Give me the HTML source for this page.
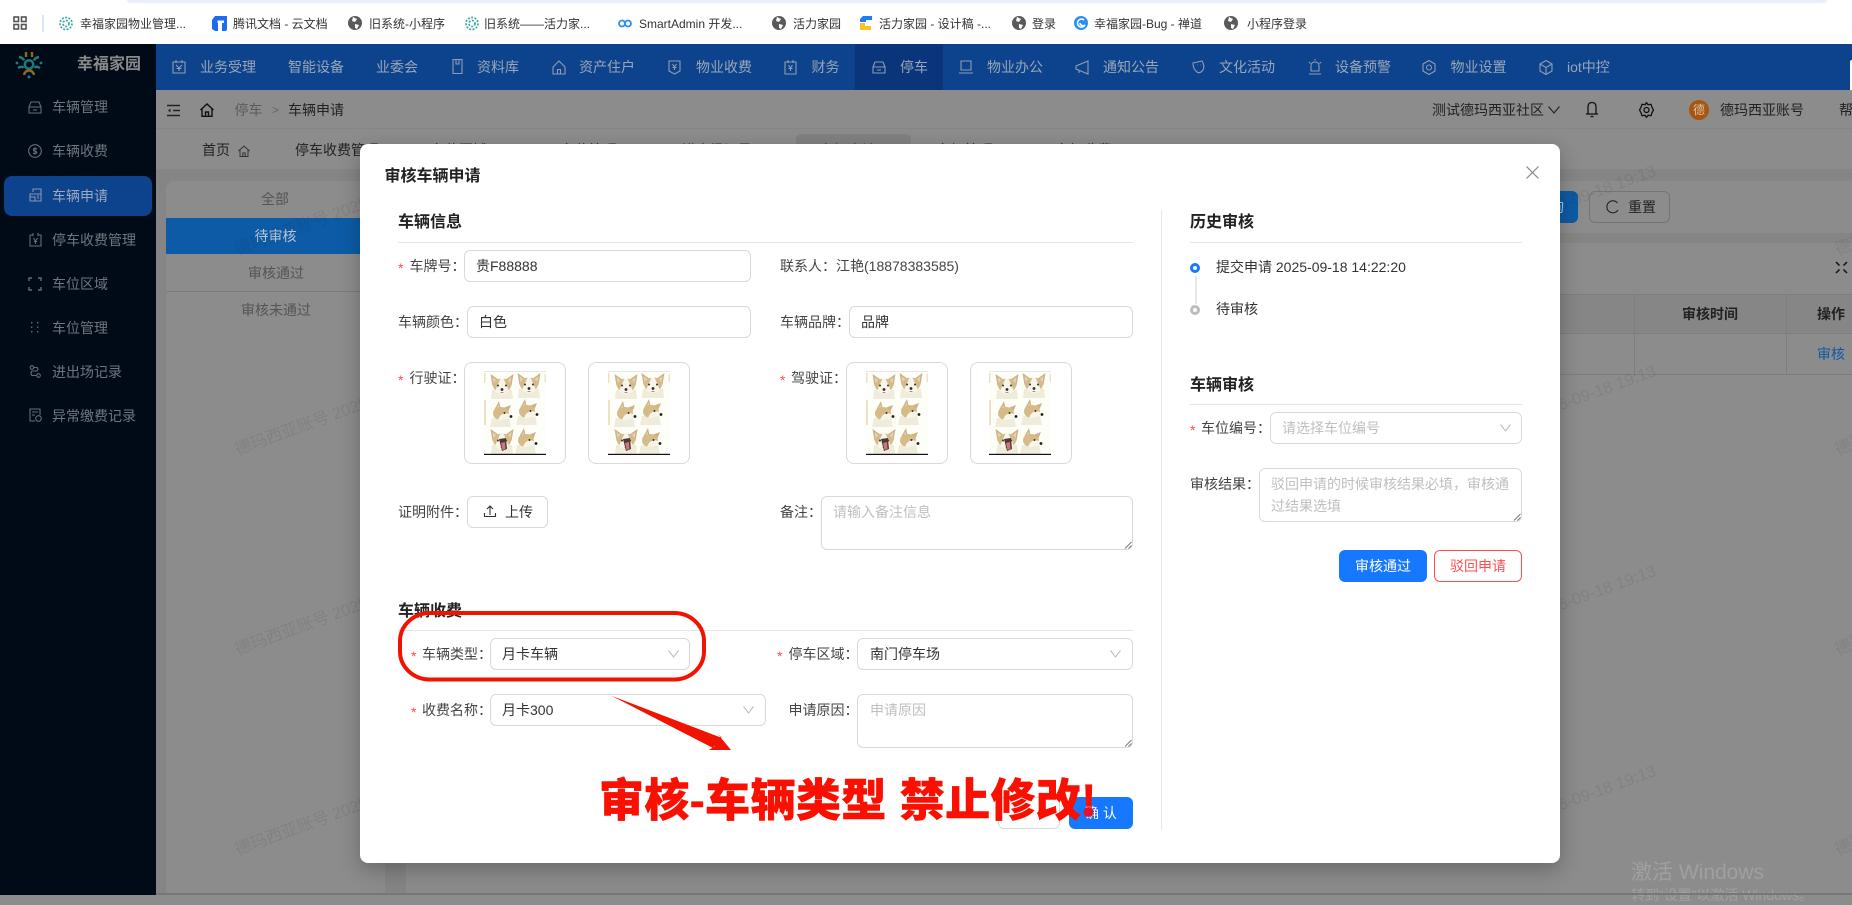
<!DOCTYPE html>
<html lang="zh-CN">
<head>
<meta charset="utf-8">
<title>审核车辆申请</title>
<style>
*{box-sizing:border-box}
html,body{margin:0;padding:0;width:1852px;height:895px;overflow:hidden;background:#8c8c8c;font-family:"Liberation Sans","Noto Sans CJK SC",sans-serif;font-size:14px;color:#333}
.a{position:absolute}
.t{position:absolute;white-space:nowrap;line-height:20px;height:20px}
.bm{font-size:12px;color:#333;top:13.5px}
.nav{color:#9aa6b9;top:57px}
.side{color:#6f757d;left:52px}
svg{position:absolute;overflow:visible}
.ic{fill:none;stroke:#8f9cb2;stroke-width:1.1}
.sic{fill:none;stroke:#666c74;stroke-width:1.1}
.wm{position:absolute;white-space:nowrap;font-size:16.5px;line-height:20px;color:rgba(0,0,0,.075);transform-origin:0 100%;transform:rotate(-20deg)}
.box{position:absolute;background:#fff;border:1px solid #d9d9d9;border-radius:6px}
.star{color:#ff4d4f;font-size:14px;line-height:20px}
.dark{color:#444}
.val{color:#333}
.ph{color:#bfbfbf}
.h{font-weight:700;font-size:16px;color:#222}
.hr{position:absolute;height:1px;background:#e6e6e6}
.img{position:absolute;width:102px;height:102px;background:#fff;border:1px solid #d9d9d9;border-radius:8px}
.chev{fill:none;stroke:#bfbfbf;stroke-width:1.1}
.grip{fill:none;stroke:#777;stroke-width:.9}
</style>
</head>
<body>

<!-- browser bookmark bar -->
<div class="a" style="left:0;top:0;width:1852px;height:44px;background:#fff"></div>
<div class="a" style="left:127px;top:0;width:1700px;height:3px;background:#e9eefa;border-radius:0 0 8px 8px"></div>
<svg style="left:13px;top:16px" width="14" height="14"><g fill="none" stroke="#555" stroke-width="1.6"><rect x="1" y="1" width="4.5" height="4.5"/><rect x="8.5" y="1" width="4.5" height="4.5"/><rect x="1" y="8.5" width="4.5" height="4.5"/><rect x="8.5" y="8.5" width="4.5" height="4.5"/></g></svg>
<div class="a" style="left:42px;top:15px;width:2px;height:17px;background:#dbe6f6"></div>

<svg style="left:59px;top:16px" width="14" height="15"><g fill="none" stroke="#3fa9a5" stroke-width="1.7" stroke-dasharray="2 1.4"><circle cx="7" cy="7.5" r="3"/><circle cx="7" cy="7.5" r="6"/></g></svg>
<div class="t bm" style="left:80px">幸福家园物业管理...</div>
<svg style="left:212px;top:16px" width="15" height="15"><path d="M3 0H15V13Q15 15 13 15H10V6H6V15H3L0 13V4Z" fill="#1c6cf0"/><path d="M5.5 4.5H12V7H10V12H8V7H5.5Z" fill="#fff"/></svg>
<div class="t bm" style="left:233px">腾讯文档 - 云文档</div>
<svg style="left:348px;top:16px" width="14" height="14"><circle cx="7" cy="7" r="7" fill="#5a5a5a"/><path d="M5 1L9 3 7 6 4 5ZM7 8L11 9 9 13 7 12Z" fill="#fff"/></svg>
<div class="t bm" style="left:369px">旧系统-小程序</div>
<svg style="left:465px;top:16px" width="14" height="15"><g fill="none" stroke="#3fa9a5" stroke-width="1.7" stroke-dasharray="2 1.4"><circle cx="7" cy="7.5" r="3"/><circle cx="7" cy="7.5" r="6"/></g></svg>
<div class="t bm" style="left:484px">旧系统——活力家...</div>
<svg style="left:618px;top:19px" width="14" height="9"><g fill="none" stroke="#2f8ff0" stroke-width="1.8"><circle cx="4" cy="4.5" r="3"/><circle cx="10" cy="4.5" r="3"/></g></svg>
<div class="t bm" style="left:639px">SmartAdmin 开发...</div>
<svg style="left:772px;top:16px" width="14" height="14"><circle cx="7" cy="7" r="7" fill="#5a5a5a"/><path d="M5 1L9 3 7 6 4 5ZM7 8L11 9 9 13 7 12Z" fill="#fff"/></svg>
<div class="t bm" style="left:793px">活力家园</div>
<svg style="left:859px;top:16px" width="14" height="14"><path d="M4 0H13V4H7V6H1V3Z" fill="#1d7ff0"/><path d="M1 7H6V10H12V14H1Z" fill="#f7c325"/></svg>
<div class="t bm" style="left:879px">活力家园 - 设计稿 -...</div>
<svg style="left:1012px;top:16px" width="14" height="14"><circle cx="7" cy="7" r="7" fill="#5a5a5a"/><path d="M5 1L9 3 7 6 4 5ZM7 8L11 9 9 13 7 12Z" fill="#fff"/></svg>
<div class="t bm" style="left:1032px">登录</div>
<svg style="left:1074px;top:16px" width="14" height="14"><circle cx="7" cy="7" r="7" fill="#2a8ff0"/><path d="M10 4A4 4 0 1 0 11 9 3 3 0 0 1 6 7" fill="none" stroke="#fff" stroke-width="1.6"/></svg>
<div class="t bm" style="left:1094px">幸福家园-Bug - 禅道</div>
<svg style="left:1224px;top:16px" width="14" height="14"><circle cx="7" cy="7" r="7" fill="#5a5a5a"/><path d="M5 1L9 3 7 6 4 5ZM7 8L11 9 9 13 7 12Z" fill="#fff"/></svg>
<div class="t bm" style="left:1247px">小程序登录</div>

<!-- sidebar -->
<div class="a" style="left:0;top:44px;width:156px;height:851px;background:#010b18"></div>
<svg style="left:14px;top:50px" width="30" height="29" viewBox="0 0 30 29"><g fill="none" stroke-width="2.4"><circle cx="15" cy="14.5" r="4.2" stroke="#1f7a80"/><path d="M5 7Q9 7.500 10 10.500M25 7Q21 7.500 20 10.500" stroke="#1f7a80"/><path d="M4 18Q8 15.500 9.500 18M26 18Q22 15.500 20.500 18" stroke="#1f7a80"/><path d="M10 25Q11 20.500 15 20.500 19 20.500 20 25" stroke="#8f6a1e"/><path d="M12 2V7M18 2V7" stroke="#8f6a1e"/></g><g fill="#1f7a80"><circle cx="15" cy="27" r="1.500"/><circle cx="3" cy="13" r="1.400"/><circle cx="27" cy="13" r="1.400"/></g></svg>
<div class="t" style="left:77px;top:55px;color:#8a8a8a;font-size:16px;font-weight:700">幸福家园</div>

<div class="a" style="left:4px;top:176px;width:148px;height:40px;border-radius:8px;background:#0c438c"></div>
<svg class="sic" style="left:28px;top:100px" width="14" height="14"><path d="M1 7L3 2H11L13 7V13H1ZM1 7H13M5 10H9"/></svg>
<div class="t side" style="top:97px">车辆管理</div>
<svg class="sic" style="left:28px;top:144px" width="14" height="14"><circle cx="7" cy="7" r="6.3"/><path d="M9 5Q7 3.5 5.5 5 5 7 7 7 9 7.5 8.500 9 7 10.500 5 9M7 3.500V10.500"/></svg>
<div class="t side" style="top:141px">车辆收费</div>
<svg class="ic" style="left:29px;top:188px;stroke:#8596b3" width="13" height="14"><path d="M4 4V1H12V13H1V6H12M8 8H10M8 10H10M1 9H6V13"/></svg>
<div class="t side" style="top:186px;color:#9aa9c0">车辆申请</div>
<svg class="sic" style="left:29px;top:233px" width="13" height="14"><path d="M1 2H4M9 2H12V13H1V2M4 0V3M9 0V3M4.500 5L6.500 8 8.500 5M6.500 8V11M4.800 8.500H8.200"/></svg>
<div class="t side" style="top:230px">停车收费管理</div>
<svg class="sic" style="left:28px;top:277px;stroke-width:1.4" width="14" height="14"><path d="M1 4V1H4M10 1H13V4M13 10V13H10M4 13H1V10"/></svg>
<div class="t side" style="top:274px">车位区域</div>
<svg style="left:31px;top:322px" width="8" height="11" fill="#666c74"><rect x="0" y="0" width="1.400" height="1.400"/><rect x="6" y="0" width="1.400" height="1.400"/><rect x="0" y="4.500" width="1.400" height="1.400"/><rect x="6" y="4.500" width="1.400" height="1.400"/><rect x="0" y="9" width="1.400" height="1.400"/><rect x="6" y="9" width="1.400" height="1.400"/></svg>
<div class="t side" style="top:318px">车位管理</div>
<svg class="sic" style="left:29px;top:365px" width="12" height="13"><circle cx="3" cy="2.500" r="1.800"/><circle cx="9.500" cy="10.500" r="1.800"/><path d="M5 2.500H8Q10 4 8 6H3Q1 8 3 10.500H7.500"/></svg>
<div class="t side" style="top:362px">进出场记录</div>
<svg class="sic" style="left:29px;top:408px" width="13" height="14"><path d="M6 13H1V1H11V7M3 4H9M3 7H6"/><circle cx="9.500" cy="10.500" r="2.800"/></svg>
<div class="t side" style="top:406px">异常缴费记录</div>

<!-- top nav -->
<div class="a" style="left:156px;top:44px;width:1696px;height:46px;background:#0c438c"></div>
<div class="a" style="left:855px;top:44px;width:88px;height:46px;background:#0a357a"></div>
<div class="a" style="left:1850px;top:60px;width:2px;height:37px;background:#fff;border-radius:2px 0 0 2px"></div>

<svg class="ic" style="left:172px;top:60px" width="14" height="14"><path d="M1 2H13V13H1ZM4 0V3M10 0V3M4 5L7 8 10 5M7 8V11M4.500 8.500H9.500"/></svg>
<div class="t nav" style="left:200px">业务受理</div>
<div class="t nav" style="left:288px">智能设备</div>
<div class="t nav" style="left:376px">业委会</div>
<svg class="ic" style="left:452px;top:59px" width="11" height="15"><path d="M1 .5H10V14.500H1ZM4 .5V5H7V.5"/></svg>
<div class="t nav" style="left:477px">资料库</div>
<svg class="ic" style="left:552px;top:60px" width="14" height="15"><path d="M1 7L7 1 13 7V14H1ZM5.500 14V9.500H8.500V14"/></svg>
<div class="t nav" style="left:579px">资产住户</div>
<svg class="ic" style="left:668px;top:60px" width="13" height="15"><path d="M1 1H12V11L6.500 14 1 11ZM4.500 4L6.500 7 8.500 4M6.500 7V10M4.500 7.500H8.500"/></svg>
<div class="t nav" style="left:696px">物业收费</div>
<svg class="ic" style="left:784px;top:60px" width="13" height="15"><path d="M1 2H12V14H1ZM4 0V3M9 0V3M4.500 5L6.500 8 8.500 5M6.500 8V11M4.500 8.500H8.500"/></svg>
<div class="t nav" style="left:811.500px">财务</div>
<svg class="ic" style="left:872px;top:60px" width="14" height="14"><path d="M1 7L3 2H11L13 7V13H1ZM1 7H13M5 10H9"/></svg>
<div class="t nav" style="left:900px">停车</div>
<svg class="ic" style="left:959px;top:60px" width="14" height="14"><path d="M2 1H12V10H2ZM0 13H14"/></svg>
<div class="t nav" style="left:987px">物业办公</div>
<svg class="ic" style="left:1075px;top:60px" width="14" height="15"><path d="M1 6L13 1V14L1 9ZM4 10V13"/></svg>
<div class="t nav" style="left:1103px">通知公告</div>
<svg class="ic" style="left:1192px;top:60px" width="13" height="14"><path d="M1 3L10 1Q13 6 11 10 8 14 5 12 1 9 1 3ZM5 5H5.500M8 5H8.500"/></svg>
<div class="t nav" style="left:1219px">文化活动</div>
<svg class="ic" style="left:1309px;top:59px" width="12" height="16"><path d="M2 12V7Q2 3 6 3 10 3 10 7V12ZM0 15H12M6 0V1.500M0 3L1.500 4.500M12 3L10.500 4.500"/></svg>
<div class="t nav" style="left:1335px">设备预警</div>
<svg class="ic" style="left:1422px;top:60px" width="14" height="15"><path d="M7 .5L13 4V11L7 14.500 1 11V4Z"/><circle cx="7" cy="7.500" r="2.500"/></svg>
<div class="t nav" style="left:1450.500px">物业设置</div>
<svg class="ic" style="left:1539px;top:60px" width="14" height="15"><path d="M7 .5L13 4V11L7 14.500 1 11V4ZM1 4L7 7.500 13 4M7 7.500V14.500"/></svg>
<div class="t nav" style="left:1567px">iot中控</div>

<!-- breadcrumb row -->
<div class="a" style="left:156px;top:90px;width:1696px;height:39px;background:#8c8c8c;border-bottom:1px solid #858585"></div>
<svg style="left:167px;top:104px" width="13" height="13" fill="none" stroke="#222" stroke-width="1.400"><path d="M0 1.500H13M6 6.500H13M0 11.500H13"/><path d="M3.500 4.500L1 6.500 3.500 8.500Z" fill="#222" stroke="none"/></svg>
<svg style="left:200px;top:103px" width="14" height="14" fill="none" stroke="#111" stroke-width="1.400"><path d="M.5 7L7 1 13.500 7M2 6V13.300H12V6M5.500 13V9H8.500V13"/></svg>
<div class="t" style="left:234.500px;top:100px;color:#5c5c5c">停车</div>
<div class="t" style="left:272px;top:100px;color:#666;font-size:12px">&gt;</div>
<div class="t" style="left:288px;top:100px;color:#222">车辆申请</div>
<div class="t" style="left:1432px;top:100px;color:#222">测试德玛西亚社区</div>
<svg style="left:1548px;top:106px" width="12" height="8" fill="none" stroke="#222" stroke-width="1.100"><path d="M.5 .5L6 7 11.500 .5"/></svg>
<svg style="left:1585px;top:101px" width="14" height="17" fill="none" stroke="#111" stroke-width="1.300"><path d="M3 13V6Q3 1.500 7 1.500 11 1.500 11 6V13ZM1 13H13M5.500 15.500H8.500"/></svg>
<svg style="left:1639px;top:102px" width="15" height="16" fill="none" stroke="#111" stroke-width="1.300"><path d="M7.500 .7L9 2.700 12 2.300 13 5.300 14.500 8 13 10.700 12 13.700 9 13.300 7.500 15.300 6 13.300 3 13.700 2 10.700 .5 8 2 5.300 3 2.300 6 2.700Z"/><circle cx="7.500" cy="8" r="2.500"/></svg>
<div class="a" style="left:1689px;top:100px;width:20px;height:20px;border-radius:50%;background:#a85510;color:#d9c2ad;font-size:12px;line-height:20px;text-align:center">德</div>
<div class="t" style="left:1720px;top:100px;color:#222">德玛西亚账号</div>
<div class="t" style="left:1839px;top:100px;color:#222">帮助</div>

<!-- tabs row -->
<div class="a" style="left:156px;top:130px;width:1696px;height:40px;background:#8c8c8c;border-bottom:1px solid #858585"></div>
<div class="a" style="left:796px;top:134px;width:115px;height:36px;background:#808080;border-radius:5px 5px 0 0"></div>
<div class="t" style="left:202px;top:140px;color:#222">首页</div>
<svg style="left:238px;top:145px" width="12" height="12" fill="none" stroke="#333" stroke-width="1"><path d="M.5 6L6 1 11.500 6M2 5V11.500H10V5M4.800 11V8H7.200V11"/></svg>
<div class="t" style="left:295px;top:140px;color:#222">停车收费管理</div>
<div class="t" style="left:431px;top:140px;color:#333">车位区域</div>
<div class="t" style="left:561px;top:140px;color:#333">车位管理</div>
<div class="t" style="left:682px;top:140px;color:#333">进出场记录</div>
<div class="t" style="left:820px;top:140px;color:#0e4f9c">车辆申请</div>
<div class="t" style="left:937px;top:140px;color:#333">车辆管理</div>
<div class="t" style="left:1056px;top:140px;color:#333">车辆收费</div>

<!-- content background -->
<div class="a" style="left:156px;top:170px;width:1696px;height:725px;background:#858585"></div>
<div class="a" style="left:166px;top:181px;width:219px;height:714px;background:#8c8c8c;border-radius:8px 0 0 0"></div>
<div class="a" style="left:406px;top:181px;width:1446px;height:52px;background:#8c8c8c"></div>
<div class="a" style="left:406px;top:243px;width:1446px;height:652px;background:#8c8c8c"></div>

<div class="t" style="left:261px;top:189px;color:#555">全部</div>
<div class="a" style="left:166px;top:218px;width:219px;height:36px;background:#0d5ba6;color:#b9c8da;text-align:center;line-height:36px">待审核</div>
<div class="t" style="left:248px;top:263px;color:#555">审核通过</div>
<div class="a" style="left:166px;top:291px;width:219px;height:1px;background:#7c7c7c"></div>
<div class="t" style="left:241px;top:300px;color:#555">审核未通过</div>

<!-- right side of page -->
<div class="a" style="left:1500px;top:191px;width:78px;height:32px;background:#0d5ba6;border-radius:6px"></div>
<div class="t" style="left:1536px;top:197px;color:#b9c8da">查询</div>
<div class="a" style="left:1589px;top:191px;width:81px;height:32px;border:1px solid #757575;border-radius:6px"></div>
<svg style="left:1606px;top:200px" width="13" height="14" fill="none" stroke="#222" stroke-width="1.100"><path d="M11.500 3A6 6 0 1 0 12 10"/></svg>
<div class="t" style="left:1628px;top:197px;color:#222">重置</div>
<svg style="left:1835px;top:261px" width="13" height="13" fill="none" stroke="#111" stroke-width="1.500"><path d="M1 1L4.500 4.500M12 1L8.500 4.500M1 12L4.500 8.500M12 12L8.500 8.500"/></svg>
<div class="a" style="left:1560px;top:294px;width:292px;height:39px;background:#868686"></div>
<div class="a" style="left:1560px;top:294px;width:292px;height:1px;background:#7e7e7e"></div>
<div class="a" style="left:1560px;top:333px;width:292px;height:1px;background:#7e7e7e"></div>
<div class="a" style="left:1560px;top:374px;width:292px;height:1px;background:#7e7e7e"></div>
<div class="a" style="left:1634px;top:294px;width:1px;height:80px;background:#7e7e7e"></div>
<div class="a" style="left:1786px;top:294px;width:1px;height:80px;background:#7e7e7e"></div>
<div class="t" style="left:1682px;top:304px;color:#222;font-weight:700">审核时间</div>
<div class="t" style="left:1817px;top:304px;color:#222;font-weight:700">操作</div>
<div class="t" style="left:1817px;top:344px;color:#0d5ba6">审核</div>

<!-- watermarks -->
<div class="wm" style="left:239px;top:240px">德玛西亚账号 2025-09-18 19:13</div>
<div class="wm" style="left:239px;top:440px">德玛西亚账号 2025-09-18 19:13</div>
<div class="wm" style="left:239px;top:640px">德玛西亚账号 2025-09-18 19:13</div>
<div class="wm" style="left:239px;top:840px">德玛西亚账号 2025-09-18 19:13</div>
<div class="wm" style="left:1439px;top:240px">德玛西亚账号 2025-09-18 19:13</div>
<div class="wm" style="left:1439px;top:440px">德玛西亚账号 2025-09-18 19:13</div>
<div class="wm" style="left:1439px;top:640px">德玛西亚账号 2025-09-18 19:13</div>
<div class="wm" style="left:1439px;top:840px">德玛西亚账号 2025-09-18 19:13</div>
<div class="wm" style="left:1839px;top:240px">德玛西亚账号 2025-09-18 19:13</div>
<div class="wm" style="left:1839px;top:440px">德玛西亚账号 2025-09-18 19:13</div>
<div class="wm" style="left:1839px;top:640px">德玛西亚账号 2025-09-18 19:13</div>
<div class="wm" style="left:1839px;top:840px">德玛西亚账号 2025-09-18 19:13</div>

<!-- activation notice -->
<div class="t" style="left:1631px;top:861px;color:#a0a0a0;font-size:21px;line-height:24px;height:24px">激活 Windows</div>
<div class="t" style="left:1631px;top:885px;color:#a0a0a0;font-size:14px">转到“设置”以激活 Windows。</div>
<div class="a" style="left:0;top:893px;width:1852px;height:2px;background:#777"></div>
<div class="a" style="left:0;top:893px;width:156px;height:2px;background:#010b18"></div>

<!-- modal -->
<div class="a" style="left:360px;top:144px;width:1200px;height:719px;background:#fff;border-radius:8px;box-shadow:0 6px 16px rgba(0,0,0,.16),0 9px 28px rgba(0,0,0,.1)"></div>
<div class="t" style="left:384.500px;top:167px;font-size:16px;font-weight:700;color:#222">审核车辆申请</div>
<svg style="left:1526px;top:166px" width="13" height="13" fill="none" stroke="#888" stroke-width="1.200"><path d="M.5 .5L12.500 12.500M12.500 .5L.5 12.500"/></svg>

<div class="t h" style="left:398px;top:213px">车辆信息</div>
<div class="hr" style="left:398px;top:242px;width:735px"></div>

<div class="t star" style="left:398px;top:258px">*</div>
<div class="t dark" style="left:409.500px;top:256px">车牌号：</div>
<div class="box" style="left:464px;top:250px;width:287px;height:32px"></div>
<div class="t val" style="left:476px;top:256px">贵F88888</div>
<div class="t dark" style="left:780px;top:256px">联系人：江艳(18878383585)</div>

<div class="t dark" style="left:398px;top:312px">车辆颜色：</div>
<div class="box" style="left:467px;top:306px;width:284px;height:32px"></div>
<div class="t val" style="left:479px;top:312px">白色</div>
<div class="t dark" style="left:780px;top:312px">车辆品牌：</div>
<div class="box" style="left:849px;top:306px;width:284px;height:32px"></div>
<div class="t val" style="left:861px;top:312px">品牌</div>

<div class="t star" style="left:398px;top:370px">*</div>
<div class="t dark" style="left:409.500px;top:368px">行驶证：</div>
<div class="t star" style="left:780px;top:370px">*</div>
<div class="t dark" style="left:791px;top:368px">驾驶证：</div>

<svg width="0" height="0" style="left:0;top:0">
<defs>
<g id="dog"><path d="M-10 4L-11 13H11L10 4Z" fill="#efecdc"/><path d="M-11.500 -12L-9.500 0 -3 -6ZM11.500 -12L9.500 0 3 -6Z" fill="#cdb285"/><path d="M-9.500 -9L-8.500 -2 -5 -5.500ZM9.500 -9L8.500 -2 5 -5.500Z" fill="#e2d2b6"/><ellipse cx="0" cy="-.5" rx="9" ry="7" fill="#d6bb88"/><path d="M-1.500 -7.500H1.500L7 5Q0 11 -7 5Z" fill="#f7f5ea"/><circle cx="-4" cy="-.5" r="1" fill="#3a3226"/><circle cx="4" cy="-.5" r="1" fill="#3a3226"/><circle cx="0" cy="3.500" r="1.400" fill="#2b2622"/><path d="M-2 6Q0 8 2 6" fill="#b8757a"/></g>
<g id="dogside"><path d="M-10 4L-12 13H9L7 3Z" fill="#efecdc"/><path d="M-3 -13L-9 -2 -1 -4ZM9 -9L1 -6 5 1Z" fill="#cdb285"/><path d="M-3.500 -9.500L-7 -3 -2.500 -4.500Z" fill="#e2d2b6"/><ellipse cx="-1" cy="-.5" rx="8" ry="6.500" fill="#d6bb88"/><path d="M-4 6Q0 7 10 3 9 0 3 -1 -2 0 -4 6Z" fill="#f7f5ea"/><circle cx="2.500" cy="-1" r="1" fill="#3a3226"/><circle cx="9" cy="2.500" r="1.400" fill="#1e1b19"/></g>
<g id="dogs">
<rect x="0" y="0" width="62" height="84" fill="#fefef8"/>
<rect x="0" y="0" width="62" height="1" fill="#e8e8e8"/>
<use href="#dog" x="18" y="15"/>
<use href="#dog" x="45" y="14"/>
<use href="#dogside" x="18" y="43"/>
<use href="#dogside" x="44" y="41"/>
<use href="#dog" x="18" y="70"/>
<path d="M15 68L22 67 23 78 18 80Z" fill="#4d3a33"/>
<path d="M17 72L21 71 21.500 78 18.500 79Z" fill="#c9777a"/>
<use href="#dogside" x="43" y="70"/>
<rect x="0" y="29" width="2" height="25" fill="#e6d5b0" opacity=".7"/>
<rect x="0" y="2" width="1.500" height="10" fill="#e6d5b0" opacity=".7"/>
<rect x="60.500" y="3" width="1.500" height="8" fill="#e6d5b0" opacity=".7"/>
<rect x="0" y="82.800" width="62" height="1.200" fill="#111"/>
</g>
</defs>
</svg>

<div class="img" style="left:464px;top:362px"></div>
<svg style="left:484px;top:371px" width="62" height="84"><use href="#dogs"/></svg>
<div class="img" style="left:588px;top:362px"></div>
<svg style="left:608px;top:371px" width="62" height="84"><use href="#dogs"/></svg>
<div class="img" style="left:846px;top:362px"></div>
<svg style="left:866px;top:371px" width="62" height="84"><use href="#dogs"/></svg>
<div class="img" style="left:970px;top:362px"></div>
<svg style="left:989px;top:371px" width="62" height="84"><use href="#dogs"/></svg>

<div class="t dark" style="left:398px;top:502px">证明附件：</div>
<div class="box" style="left:467px;top:496px;width:81px;height:32px"></div>
<svg style="left:484px;top:505px" width="12" height="13" fill="none" stroke="#333" stroke-width="1.100"><path d="M6 10V1M3 4L6 1 9 4M.5 8V11.500H11.500V8"/></svg>
<div class="t val" style="left:505px;top:502px">上传</div>
<div class="t dark" style="left:780px;top:502px">备注：</div>
<div class="box" style="left:821px;top:496px;width:312px;height:54px"></div>
<div class="t ph" style="left:833px;top:502px">请输入备注信息</div>
<svg class="grip" style="left:1124px;top:541px" width="8" height="8"><path d="M1 7.500L7.500 1M4.500 7.500L7.500 4.500"/></svg>

<div class="t h" style="left:398px;top:602px">车辆收费</div>
<div class="hr" style="left:398px;top:630px;width:735px"></div>

<div class="t star" style="left:411px;top:646px">*</div>
<div class="t dark" style="left:422px;top:644px">车辆类型：</div>
<div class="box" style="left:490px;top:638px;width:200px;height:32px"></div>
<div class="t val" style="left:502px;top:644px">月卡车辆</div>
<svg class="chev" style="left:668px;top:650px" width="11" height="8"><path d="M.5 .5L5.500 7 10.500 .5"/></svg>
<div class="t star" style="left:777px;top:646px">*</div>
<div class="t dark" style="left:788.500px;top:644px">停车区域：</div>
<div class="box" style="left:857px;top:638px;width:276px;height:32px"></div>
<div class="t val" style="left:870px;top:644px">南门停车场</div>
<svg class="chev" style="left:1110px;top:650px" width="11" height="8"><path d="M.5 .5L5.500 7 10.500 .5"/></svg>

<div class="t star" style="left:411px;top:702px">*</div>
<div class="t dark" style="left:422px;top:700px">收费名称：</div>
<div class="box" style="left:490px;top:694px;width:275.500px;height:32px"></div>
<div class="t val" style="left:502px;top:700px">月卡300</div>
<svg class="chev" style="left:743px;top:706px" width="11" height="8"><path d="M.5 .5L5.500 7 10.500 .5"/></svg>
<div class="t dark" style="left:788.500px;top:700px">申请原因：</div>
<div class="box" style="left:857px;top:694px;width:276px;height:54px"></div>
<div class="t ph" style="left:870px;top:700px">申请原因</div>
<svg class="grip" style="left:1124px;top:739px" width="8" height="8"><path d="M1 7.500L7.500 1M4.500 7.500L7.500 4.500"/></svg>

<div class="box" style="left:998px;top:797px;width:62px;height:32px"></div>
<div class="a" style="left:1069px;top:797px;width:64px;height:32px;background:#1677ff;border-radius:6px;color:#fff;text-align:center;line-height:32px">确 认</div>

<!-- right column -->
<div class="a" style="left:1161px;top:210px;width:1px;height:620px;background:#e6e6e6"></div>
<div class="t h" style="left:1190px;top:213px">历史审核</div>
<div class="hr" style="left:1190px;top:242px;width:332px"></div>
<div class="a" style="left:1195px;top:276px;width:2px;height:28px;background:#e8e8e8"></div>
<div class="a" style="left:1190px;top:263px;width:10px;height:10px;border-radius:50%;border:3px solid #1677ff;background:#fff"></div>
<div class="a" style="left:1190px;top:305px;width:10px;height:10px;border-radius:50%;border:3px solid #bdbdbd;background:#fff"></div>
<div class="t val" style="left:1216px;top:257px">提交申请 2025-09-18 14:22:20</div>
<div class="t val" style="left:1216px;top:299px">待审核</div>

<div class="t h" style="left:1190px;top:376px">车辆审核</div>
<div class="hr" style="left:1190px;top:404px;width:332px"></div>
<div class="t star" style="left:1190px;top:420px">*</div>
<div class="t dark" style="left:1201px;top:418px">车位编号：</div>
<div class="box" style="left:1270px;top:412px;width:252px;height:32px"></div>
<div class="t ph" style="left:1282px;top:418px">请选择车位编号</div>
<svg class="chev" style="left:1500px;top:424px" width="11" height="8"><path d="M.5 .5L5.500 7 10.500 .5"/></svg>

<div class="t dark" style="left:1190px;top:474px">审核结果：</div>
<div class="box" style="left:1259px;top:468px;width:263px;height:54px"></div>
<div class="t ph" style="left:1271px;top:474px">驳回申请的时候审核结果必填，审核通</div>
<div class="t ph" style="left:1271px;top:496px">过结果选填</div>
<svg class="grip" style="left:1513px;top:513px" width="8" height="8"><path d="M1 7.500L7.500 1M4.500 7.500L7.500 4.500"/></svg>

<div class="a" style="left:1339px;top:550px;width:88px;height:32px;background:#1677ff;border-radius:6px;color:#fff;text-align:center;line-height:32px">审核通过</div>
<div class="a" style="left:1434px;top:550px;width:88px;height:32px;background:#fff;border:1px solid #ff4d4f;border-radius:6px;color:#ff4d4f;text-align:center;line-height:30px">驳回申请</div>

<!-- annotations -->
<svg style="left:0;top:0" width="1852" height="895">
<rect x="400" y="613" width="304" height="66.500" rx="30" ry="28" fill="none" stroke="#f01400" stroke-width="4"/>
<path d="M612 696L722 738 717 733 731 750 709 750 715 746Z" fill="#f01400"/>
<path d="M612 696L718 740 713 748Z" fill="#f01400"/>
</svg>
<div class="t" style="left:599px;top:773px;height:56px;line-height:56px;font-size:45px;font-weight:900;color:#fb0f00;-webkit-text-stroke:.5px #fb0f00;letter-spacing:.4px">审核-车辆类型 禁止修改!</div>
<svg style="left:0;top:0" width="1852" height="895"><circle cx="1088.500" cy="812" r="5" fill="#e8102a"/></svg>

</body>
</html>
